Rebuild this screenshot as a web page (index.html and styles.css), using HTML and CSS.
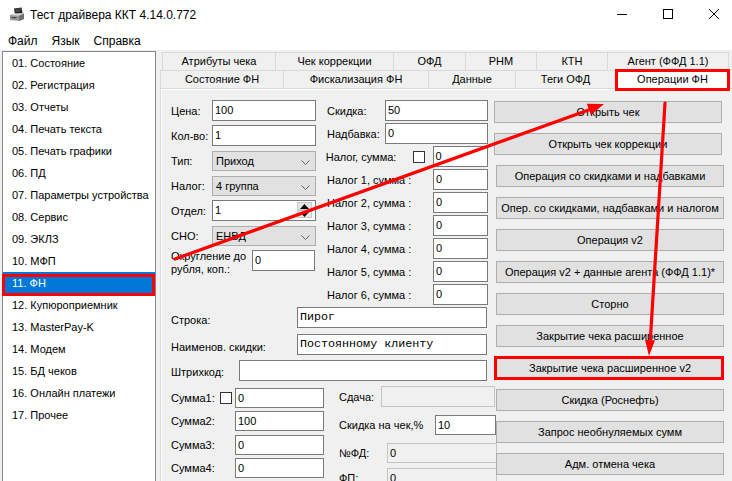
FILE: index.html
```html
<!DOCTYPE html>
<html lang="ru">
<head>
<meta charset="utf-8">
<title>Тест драйвера ККТ 4.14.0.772</title>
<link rel="stylesheet" href="styles.css">
</head>
<body>
<div class="window">
  <header class="titlebar">
    <svg class="app-icon" viewBox="0 0 16 16" width="16" height="16">
      <path d="M5 1.5 L12.5 0.5 L13.5 6 L6 7 Z" fill="#1a1a1a"/>
      <path d="M6.2 2.4 L11.8 1.6 M6.4 3.6 L12 2.8 M6.6 4.8 L12.2 4" stroke="#777" stroke-width="0.6"/>
      <path d="M1 8 L6 6.5 L15 6.5 L15 12 L10 14 L1 13 Z" fill="#9a9a9a"/>
      <path d="M1 8 L10 8.8 L15 6.5 L6 6.5 Z" fill="#d6d6d6"/>
      <path d="M10 8.8 L10 14 L15 12 L15 6.5 Z" fill="#6f6f6f"/>
      <rect x="2.5" y="10" width="5" height="1.2" fill="#444"/>
    </svg>
    <span class="title">Тест драйвера ККТ 4.14.0.772</span>
    <div class="controls">
      <span class="ctl"><svg width="10" height="10" viewBox="0 0 10 10"><path d="M0 5.5 H10" stroke="#000" stroke-width="1"/></svg></span>
      <span class="ctl"><svg width="10" height="10" viewBox="0 0 10 10"><rect x="0.5" y="0.5" width="9" height="9" fill="none" stroke="#000" stroke-width="1"/></svg></span>
      <span class="ctl"><svg width="10" height="10" viewBox="0 0 10 10"><path d="M0 0 L10 10 M10 0 L0 10" stroke="#000" stroke-width="1"/></svg></span>
    </div>
  </header>

  <nav class="menubar">
    <span>Файл</span>
    <span>Язык</span>
    <span>Справка</span>
  </nav>

  <div class="main">
    <ul class="list">
      <li>01. Состояние</li>
      <li>02. Регистрация</li>
      <li>03. Отчеты</li>
      <li>04. Печать текста</li>
      <li>05. Печать графики</li>
      <li>06. ПД</li>
      <li>07. Параметры устройства</li>
      <li>08. Сервис</li>
      <li>09. ЭКЛЗ</li>
      <li>10. МФП</li>
      <li class="sel">11. ФН</li>
      <li>12. Купюроприемник</li>
      <li>13. MasterPay-K</li>
      <li>14. Модем</li>
      <li>15. БД чеков</li>
      <li>16. Онлайн платежи</li>
      <li>17. Прочее</li>
    </ul>

    <div class="tabctl">
      <div class="tabrow row1">
        <span class="tab">Атрибуты чека</span>
        <span class="tab">Чек коррекции</span>
        <span class="tab">ОФД</span>
        <span class="tab">РНМ</span>
        <span class="tab">КТН</span>
        <span class="tab">Агент (ФФД 1.1)</span>
      </div>
      <div class="tabrow row2">
        <span class="tab">Состояние ФН</span>
        <span class="tab">Фискализация ФН</span>
        <span class="tab">Данные</span>
        <span class="tab">Теги ОФД</span>
        <span class="tab active">Операции ФН</span>
      </div>

      <div class="tabpage">
        <div class="form">
          <div class="top">
            <div class="colA">
              <div class="row"><span class="lbl">Цена:</span><span class="input f-a">100</span></div>
              <div class="row"><span class="lbl">Кол-во:</span><span class="input f-a">1</span></div>
              <div class="row"><span class="lbl">Тип:</span><span class="select f-a">Приход<svg class="chev" width="9" height="5" viewBox="0 0 9 5"><path d="M0.5 0.5 L4.5 4.5 L8.5 0.5" fill="none" stroke="#606060"/></svg></span></div>
              <div class="row"><span class="lbl">Налог:</span><span class="select f-a">4 группа<svg class="chev" width="9" height="5" viewBox="0 0 9 5"><path d="M0.5 0.5 L4.5 4.5 L8.5 0.5" fill="none" stroke="#606060"/></svg></span></div>
              <div class="row"><span class="lbl">Отдел:</span><span class="input f-a spin-host">1<span class="spin"><span class="spin-btn"><svg width="9" height="5" viewBox="0 0 9 5"><path d="M0 5 L4.5 0 L9 5 Z" fill="#000"/></svg></span><span class="spin-btn"><svg width="9" height="5" viewBox="0 0 9 5"><path d="M0 0 L4.5 5 L9 0 Z" fill="#000"/></svg></span></span></span></div>
              <div class="row extra"><span class="lbl">СНО:</span><span class="select f-a">ЕНВД<svg class="chev" width="9" height="5" viewBox="0 0 9 5"><path d="M0.5 0.5 L4.5 4.5 L8.5 0.5" fill="none" stroke="#606060"/></svg></span></div>
              <div class="row extra"><span class="lbl lbl-two">Округление до<br>рубля, коп.:</span><span class="input f-round">0</span></div>
            </div>
            <div class="colB">
              <div class="row"><span class="lbl l-wide">Скидка:</span><span class="input f-b">50</span></div>
              <div class="row"><span class="lbl l-wide">Надбавка:</span><span class="input f-b">0</span></div>
              <div class="row"><span class="lbl l-chk">Налог, сумма:</span><span class="chk"></span><span class="input f-c">0</span></div>
              <div class="row"><span class="lbl l-tax">Налог 1, сумма :</span><span class="input f-c">0</span></div>
              <div class="row"><span class="lbl l-tax">Налог 2, сумма :</span><span class="input f-c">0</span></div>
              <div class="row"><span class="lbl l-tax">Налог 3, сумма :</span><span class="input f-c">0</span></div>
              <div class="row"><span class="lbl l-tax">Налог 4, сумма :</span><span class="input f-c">0</span></div>
              <div class="row"><span class="lbl l-tax">Налог 5, сумма :</span><span class="input f-c">0</span></div>
              <div class="row"><span class="lbl l-tax">Налог 6, сумма :</span><span class="input f-c">0</span></div>
            </div>
          </div>

          <div class="wide">
            <div class="row r-str"><span class="lbl l-str">Строка:</span><span class="input mono f-str">Пирог</span></div>
            <div class="row r-name"><span class="lbl l-str">Наименов. скидки:</span><span class="input mono f-str">Постоянному клиенту</span></div>
            <div class="row r-bar"><span class="lbl l-bar">Штрихкод:</span><span class="input f-bar"></span></div>
          </div>

          <div class="bottom">
            <div class="colC">
              <div class="row"><span class="lbl l-s1">Сумма1:</span><span class="chk"></span><span class="input f-sum">0</span></div>
              <div class="row"><span class="lbl l-sum">Сумма2:</span><span class="input f-sum">100</span></div>
              <div class="row"><span class="lbl l-sum">Сумма3:</span><span class="input f-sum">0</span></div>
              <div class="row"><span class="lbl l-sum">Сумма4:</span><span class="input f-sum">0</span></div>
            </div>
            <div class="colD">
              <div class="row r-change"><span class="lbl l-change">Сдача:</span><span class="input disabled f-change"></span></div>
              <div class="row r-disc"><span class="lbl l-disc">Скидка на чек,%</span><span class="input f-disc">10</span></div>
              <div class="row r-fd"><span class="lbl l-fd">№ФД:</span><span class="input disabled f-fd">0</span></div>
              <div class="row r-fp"><span class="lbl l-fd">ФП:</span><span class="input disabled f-fd">0</span></div>
            </div>
          </div>
        </div>

        <div class="buttons">
          <span class="btn shift">Открыть чек</span>
          <span class="btn shift">Открыть чек коррекции</span>
          <span class="btn">Операция со скидками и надбавками</span>
          <span class="btn">Опер. со скидками, надбавками и налогом</span>
          <span class="btn">Операция v2</span>
          <span class="btn">Операция v2 + данные агента (ФФД 1.1)*</span>
          <span class="btn">Сторно</span>
          <span class="btn">Закрытие чека расширенное</span>
          <span class="btn">Закрытие чека расширенное v2</span>
          <span class="btn">Скидка (Роснефть)</span>
          <span class="btn">Запрос необнуляемых сумм</span>
          <span class="btn">Адм. отмена чека</span>
        </div>
      </div>
    </div>
  </div>

  <svg class="annot" width="732" height="481" viewBox="0 0 732 481">
    <g fill="none" stroke="#ff0000" stroke-width="3">
      <rect x="3.5" y="275.5" width="150" height="19"/>
      <rect x="616.5" y="70.5" width="112" height="19"/>
      <rect x="495.5" y="357.5" width="227" height="21"/>
    </g>
    <g stroke="#ff0000" stroke-width="3.2" stroke-linecap="round">
      <line x1="175" y1="259" x2="590" y2="109.5"/>
      <line x1="665" y1="103" x2="650.2" y2="342"/>
    </g>
    <g fill="#ff0000">
      <polygon points="604,104 590.9,115.1 586.9,103.8"/>
      <polygon points="649,356 655,340.3 645,339.7"/>
    </g>
  </svg>
</div>
</body>
</html>
```

FILE: styles.css
```css
* { box-sizing: border-box; }

html, body {
  margin: 0;
  padding: 0;
  background: #f0f0f0;
}

.window {
  position: relative;
  width: 732px;
  height: 481px;
  overflow: hidden;
  background: #f0f0f0;
  font-family: "Liberation Sans", Arial, sans-serif;
  font-size: 11px;
  color: #000;
}

/* ---------- title bar ---------- */
.titlebar {
  height: 31px;
  background: #fff;
  display: flex;
  align-items: center;
}
.app-icon {
  margin-left: 9px;
  margin-top: -2px;
  flex: none;
}
.title {
  margin-left: 5px;
  font-size: 12px;
  margin-top: -1px;
}
.controls {
  margin-left: auto;
  margin-right: -5px;
  display: flex;
  height: 31px;
  padding-bottom: 3px;
}
.ctl {
  width: 46px;
  display: flex;
  align-items: center;
  justify-content: center;
}

/* ---------- menu ---------- */
.menubar {
  height: 19px;
  background: #fff;
  display: flex;
  align-items: center;
  gap: 14px;
  padding-left: 8px;
  font-size: 12px;
}

/* ---------- main ---------- */
.main {
  display: flex;
  height: 431px;
}

.list {
  list-style: none;
  margin: 1px 0 0 2px;
  padding: 0;
  width: 154px;
  height: 440px;
  border: 1px solid #828790;
  background: #fff;
  flex: none;
}
.list li {
  height: 22px;
  line-height: 22px;
  padding-left: 9px;
  white-space: nowrap;
}
.list li.sel {
  background: #0078d7;
  color: #fff;
}

/* ---------- tabs ---------- */
.tabctl {
  flex: 1;
  margin-left: 4px;
  margin-top: 2px;
  display: flex;
  flex-direction: column;
  min-width: 0;
}
.tabrow {
  display: flex;
  height: 18px;
  flex: none;
}
.row1 { margin-left: 2px; }
.tab {
  border: 1px solid #d9d9d9;
  border-bottom: none;
  margin-right: -1px;
  text-align: center;
  line-height: 17px;
  background: #f0f0f0;
  white-space: nowrap;
  flex: none;
}
.row1 .tab:nth-child(1) { width: 114px; }
.row1 .tab:nth-child(2) { width: 119px; }
.row1 .tab:nth-child(3) { width: 73px; }
.row1 .tab:nth-child(4) { width: 72px; }
.row1 .tab:nth-child(5) { width: 72px; }
.row1 .tab:nth-child(6) { width: 122px; }
.row2 .tab:nth-child(1) { width: 124px; }
.row2 .tab:nth-child(2) { width: 146px; }
.row2 .tab:nth-child(3) { width: 88px; }
.row2 .tab:nth-child(4) { width: 101px; }
.row2 .tab:nth-child(5) { width: 115px; }
.tab.active {
  background: #fff;
  line-height: 16px;
}

.tabpage {
  flex: 1;
  display: flex;
  border-top: 1px solid #d9d9d9;
  border-left: 1px solid #d9d9d9;
  box-shadow: inset 1px 1px 0 #fff;
}

/* ---------- form ---------- */
.form {
  width: 335px;
  flex: none;
  padding: 11px 0 0 10px;
}
.row {
  display: flex;
  align-items: center;
  height: 21px;
}
.lbl {
  white-space: nowrap;
  flex: none;
}
.input, .select {
  height: 100%;
  border: 1px solid #7a7a7a;
  background: #fff;
  padding-left: 2px;
  line-height: 19px;
  flex: none;
  white-space: nowrap;
  overflow: hidden;
}
.select {
  position: relative;
  background: #e1e1e1;
  border-color: #adadad;
  padding-left: 3px;
}
.chev {
  position: absolute;
  right: 5px;
  top: 8px;
}
.mono {
  font-family: "Liberation Mono", "Courier New", monospace;
  font-size: 11.7px;
}
.disabled {
  background: #f0f0f0;
  border-color: #c4c4c4;
}
.chk {
  width: 12px;
  height: 12px;
  border: 1px solid #333;
  background: #fff;
  flex: none;
}

.top { display: flex; }

.colA { width: 154px; }
.colA .row { margin-bottom: 4px; }
.colA .row.extra { margin-top: 2px; }
.colA .lbl { width: 41px; }
.f-a { width: 104px; }
.colA .select { height: 20px; }
.lbl-two {
  width: 81px !important;
  line-height: 13px;
  padding-top: 4px;
}
.f-round { width: 63px; }

.spin-host { position: relative; }
.spin {
  position: absolute;
  right: 3px;
  top: 1px;
  width: 15px;
  height: 16px;
  display: flex;
  flex-direction: column;
}
.spin-btn {
  flex: 1;
  display: flex;
  align-items: center;
  justify-content: center;
  background: #e6e6e6;
  border: 1px solid #c8c8c8;
}

.colB .row { margin-bottom: 2px; }
.l-wide { width: 60px; padding-left: 2px; }
.f-b { width: 103px; }
.l-chk { width: 87.5px; padding-left: 0.7px; }
.colB .chk { margin-right: 8px; }
.l-tax { width: 108px; padding-left: 2px; }
.f-c { width: 55px; }

.wide .row { height: 21px; }
.r-str { margin-top: 0; }
.r-name { margin-top: 6px; }
.r-bar { margin-top: 5px; }
.l-str { width: 126px; padding-top: 4px; }
.f-str { width: 190px; }
.l-bar { width: 68px; padding-top: 2px; }
.f-bar { width: 248px; }

.bottom {
  display: flex;
  margin-top: 7px;
}
.colC { width: 168px; flex: none; }
.colC .row { height: 20px; margin-bottom: 3.33px; }
.l-s1 { width: 49px; }
.colC .chk { margin-right: 3px; }
.l-sum { width: 64px; }
.f-sum { width: 89px; }

.colD { margin-top: -2px; }
.r-change { height: 21px; }
.l-change { width: 42px; }
.f-change { width: 114px; }
.r-disc { height: 20px; margin-top: 8px; }
.l-disc { width: 96px; }
.f-disc { width: 61px; }
.r-fd { height: 20px; margin-top: 8px; }
.r-fp { height: 20px; margin-top: 5px; }
.l-fd { width: 48px; }
.f-fd { width: 110px; }

/* ---------- buttons ---------- */
.buttons {
  display: flex;
  flex-direction: column;
  gap: 10px;
  padding-top: 12px;
  flex: none;
}
.btn {
  width: 228px;
  height: 22px;
  background: #e1e1e1;
  border: 1px solid #adadad;
  text-align: center;
  line-height: 20px;
  white-space: nowrap;
  flex: none;
}
.btn.shift { margin-left: -2px; }

/* ---------- annotations ---------- */
.annot {
  position: absolute;
  left: 0;
  top: 0;
  pointer-events: none;
}
```
